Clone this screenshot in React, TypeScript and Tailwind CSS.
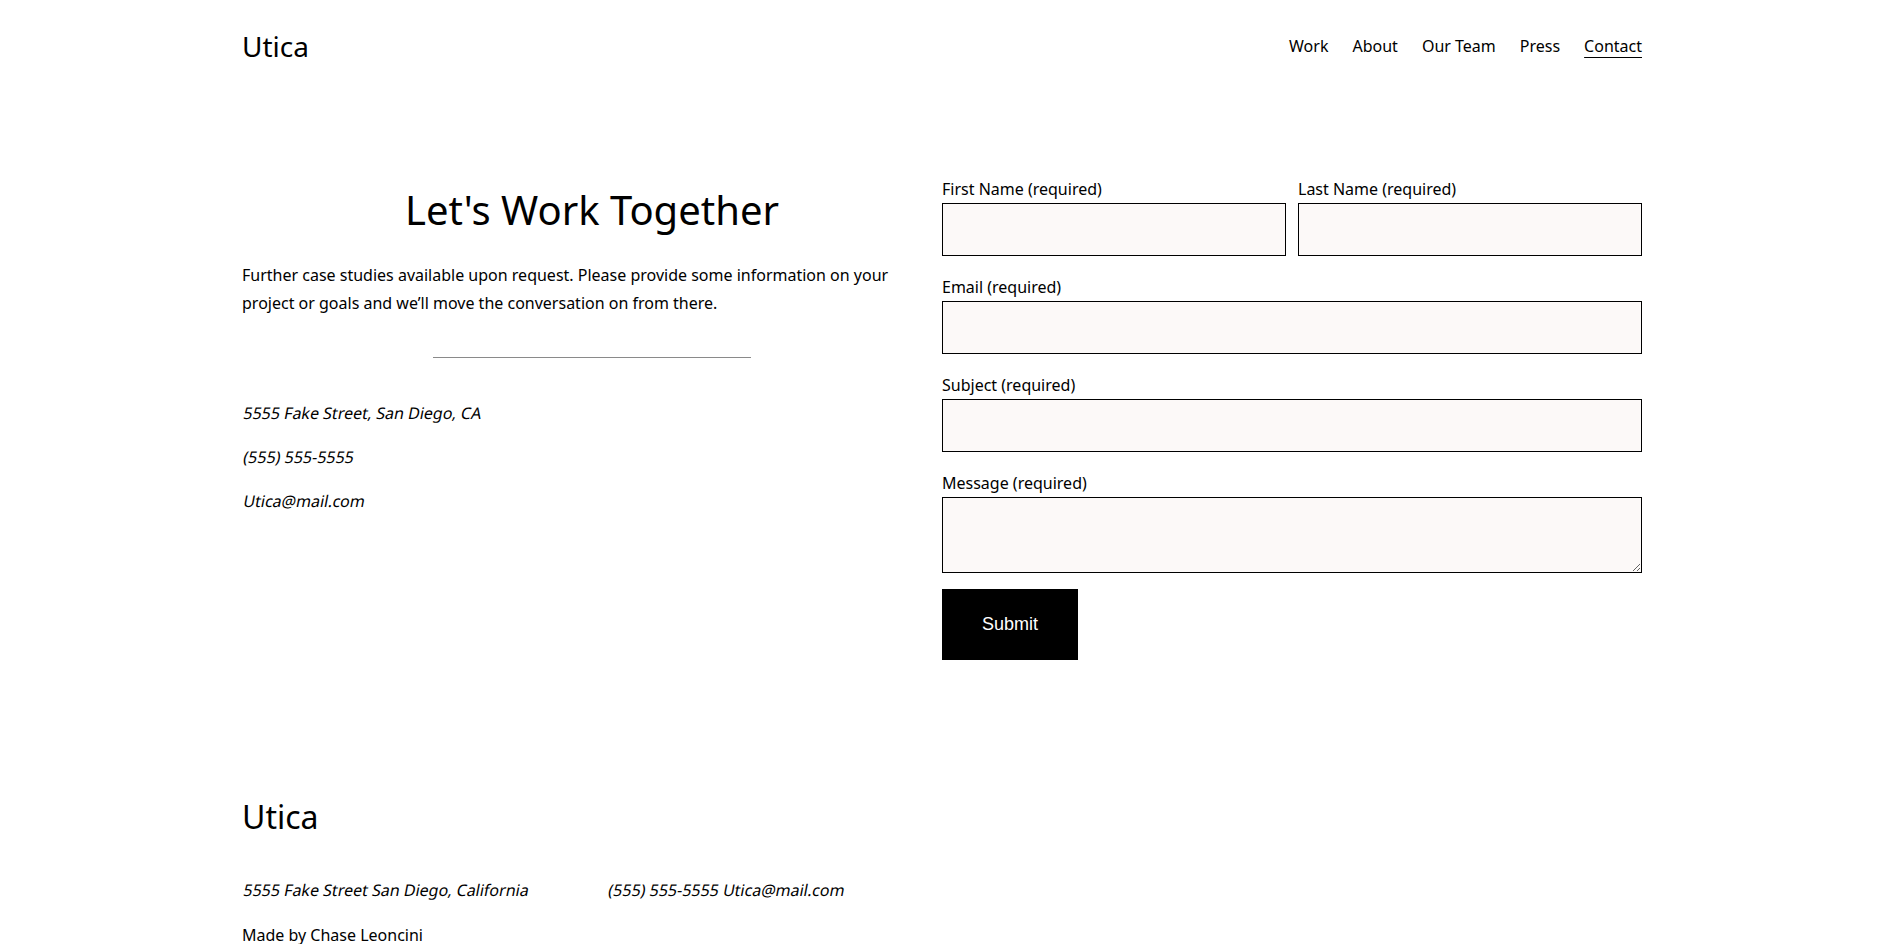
import React from "react";

const font = { fontFamily: '"Noto Sans", "Open Sans", sans-serif' };

function Field({ label, tall }: { label: string; tall?: boolean }) {
  return (
    <div className="mb-[19px] flex flex-col">
      <label className="mb-[2px] text-[16px] leading-[24px] text-black">{label}</label>
      {tall ? (
        <textarea className="block h-[76px] w-full resize-y border border-black bg-[#fcf9f8] px-2 py-1 outline-none" />
      ) : (
        <input className="block h-[53px] w-full border border-black bg-[#fcf9f8] px-2 outline-none" />
      )}
    </div>
  );
}

// the reference slants the regular face rather than using a true italic
function Slant({ children }: { children: React.ReactNode }) {
  return <span className="inline-block origin-[0_87%] -skew-x-[11deg]">{children}</span>;
}

export default function App() {
  return (
    <div className="min-h-screen bg-white text-black" style={font}>
      {/* Header */}
      <header className="mx-auto flex max-w-[1400px] items-center justify-between pt-[26px]">
        <a className="text-[28px] leading-[40px]">Utica</a>
        <nav className="flex items-center gap-[24px] text-[16px] leading-[24px]">
          <a>Work</a>
          <a>About</a>
          <a>Our Team</a>
          <a>Press</a>
          <a className="underline decoration-1 underline-offset-[5px]">Contact</a>
        </nav>
      </header>

      {/* Contact section */}
      <main className="mx-auto mt-[111px] grid max-w-[1400px] grid-cols-2">
        <div className="flex flex-col">
          <h1 className="mt-[8px] text-center text-[40px] leading-[50px]">Let's Work Together</h1>
          <p className="mt-[26px] text-[16px] leading-[28px]">
            Further case studies available upon request. Please provide some information on your
            project or goals and we’ll move the conversation on from there.
          </p>
          <div className="mx-auto mt-[40px] h-[1px] w-[318px] bg-[#8a8a8a]" />
          <div className="mt-[43px] flex flex-col gap-[20px] text-[16px] leading-[24px]">
            <p><Slant>5555 Fake Street, San Diego, CA</Slant></p>
            <p><Slant>(555) 555-5555</Slant></p>
            <p><Slant>Utica@mail.com</Slant></p>
          </div>
        </div>

        <form className="flex flex-col">
          <div className="grid grid-cols-2 gap-[12px]">
            <Field label="First Name (required)" />
            <Field label="Last Name (required)" />
          </div>
          <Field label="Email (required)" />
          <Field label="Subject (required)" />
          <Field label="Message (required)" tall />
          <button
            type="button"
            className="-mt-[3px] h-[71px] w-[136px] bg-black text-[18px] text-white"
            style={{ fontFamily: '"Liberation Sans", Arial, sans-serif' }}
          >
            Submit
          </button>
        </form>
      </main>

      {/* Footer */}
      <footer className="mx-auto mt-[137px] max-w-[1400px] pb-[20px]">
        <h2 className="text-[32px] leading-[40px]">Utica</h2>
        <div className="mt-[41px] flex gap-[80px] text-[16px] leading-[24px]">
          <p><Slant>5555 Fake Street San Diego, California</Slant></p>
          <p><Slant>(555) 555-5555 Utica@mail.com</Slant></p>
        </div>
        <p className="mt-[21px] text-[16px] leading-[24px]">Made by Chase Leoncini</p>
      </footer>
    </div>
  );
}
